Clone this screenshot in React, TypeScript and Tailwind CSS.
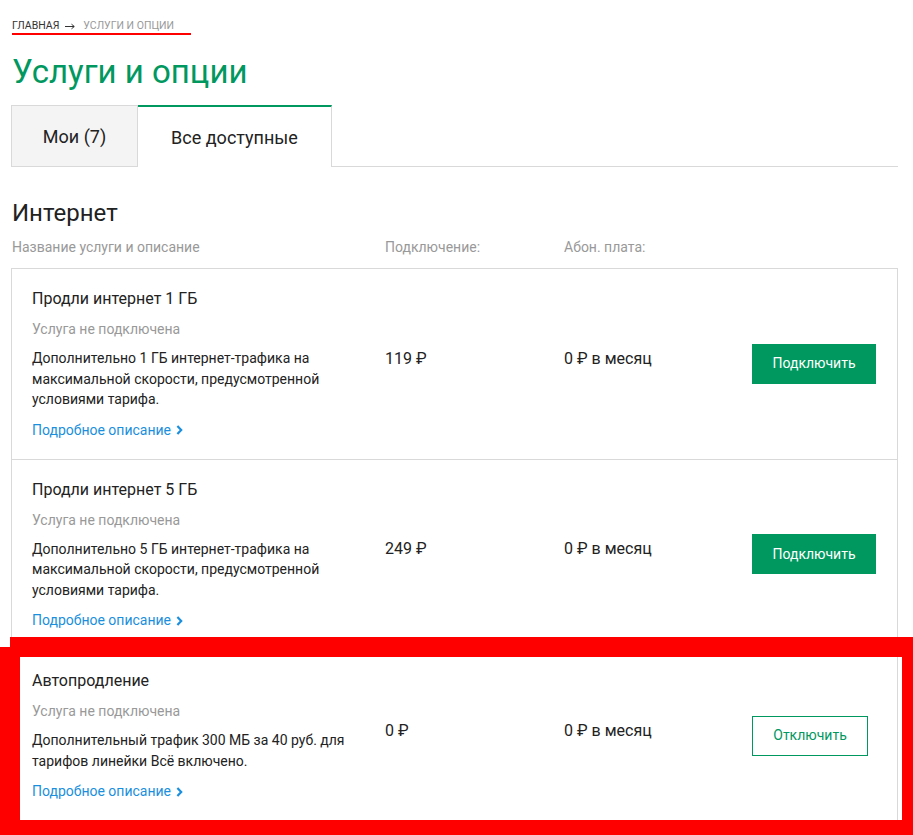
import React from "react";

type Service = {
  title: string;
  desc: string;
  price: string;
  connected: boolean;
};

const services: Service[] = [
  {
    title: "Продли интернет 1 ГБ",
    desc: "Дополнительно 1 ГБ интернет-трафика на максимальной скорости, предусмотренной условиями тарифа.",
    price: "119 ₽",
    connected: false,
  },
  {
    title: "Продли интернет 5 ГБ",
    desc: "Дополнительно 5 ГБ интернет-трафика на максимальной скорости, предусмотренной условиями тарифа.",
    price: "249 ₽",
    connected: false,
  },
  {
    title: "Автопродление",
    desc: "Дополнительный трафик 300 МБ за 40 руб. для тарифов линейки Всё включено.",
    price: "0 ₽",
    connected: true,
  },
];

function Chevron() {
  return (
    <svg width="7" height="10" viewBox="0 0 7 10" className="inline-block ml-[5px] mb-[1px]">
      <path d="M1.4 1 L5.2 5 L1.4 9" fill="none" stroke="#1a8fdd" strokeWidth="2.2" />
    </svg>
  );
}

function Row({ s, last }: { s: Service; last: boolean }) {
  return (
    <div
      className={`flex items-center pl-[20px] pr-[20px] ${last ? "pt-[1px]" : "border-b border-[#d9d9d9]"}`}
    >
      <div className="w-[353px] shrink-0 pt-[18px] pb-[19px]">
        <div className="text-[16px] leading-[24px] text-[#222]">{s.title}</div>
        <div className="mt-[8px] text-[14px] leading-[20px] text-[#999]">Услуга не подключена</div>
        <div className="mt-[9px] w-[330px] text-[14px] leading-[20.5px] text-[#222]">{s.desc}</div>
        <div className="mt-[10px] text-[14px] leading-[20px] text-[#1a8fdd]">
          Подробное описание
          <Chevron />
        </div>
      </div>
      <div className="w-[179px] shrink-0 pb-[10px] text-[16px] leading-[20px] text-[#222]">{s.price}</div>
      <div className="w-[188px] shrink-0 pb-[10px] text-[16px] leading-[20px] text-[#222]">0 ₽ в месяц</div>
      <div className="flex-1">
        {s.connected ? (
          <button className="h-[40px] w-[116px] border border-[#00985f] bg-white text-[14px] text-[#00985f]">
            Отключить
          </button>
        ) : (
          <button className="h-[40px] w-[124px] bg-[#00985f] text-[14px] text-white">Подключить</button>
        )}
      </div>
    </div>
  );
}

export default function App() {
  return (
    <div
      className="relative min-h-[835px] bg-white overflow-hidden"
      style={{ fontFamily: "Roboto, 'Noto Sans', sans-serif" }}
    >
      <div className="ml-[11px] w-[887px] pt-[20px]">
        <div className="pl-[1px] h-[12px] text-[10.5px] leading-[12px] uppercase flex items-center">
          <span className="text-[#333]">Главная</span>
          <svg width="10" height="7" viewBox="0 0 10 7" className="ml-[6px] mr-[8px] mt-[1px]">
            <path d="M0 3.5 H9" stroke="#333" strokeWidth="1" />
            <path d="M6.5 1.2 L9.3 3.5 L6.5 5.8" fill="none" stroke="#333" strokeWidth="1" />
          </svg>
          <span className="text-[#999]">Услуги и опции</span>
        </div>
        <div className="mt-[1px] ml-[1px] h-[2px] w-[179px] bg-[#ff0000]" />

        <h1 className="mt-[17px] pl-[1px] text-[33px] leading-[40px] text-[#00985f]">Услуги и опции</h1>

        <div className="mt-[13px] flex h-[62px] border-b border-[#d9d9d9]">
          <div className="w-[127px] -mb-px flex items-center justify-center border border-[#d9d9d9] bg-[#f4f4f4] text-[18px] text-[#222]">
            Мои (7)
          </div>
          <div className="w-[194px] -mb-px flex items-center justify-center border-t-2 border-t-[#00985f] border-r border-r-[#d9d9d9] bg-white text-[18px] text-[#222]">
            Все доступные
          </div>
        </div>

        <h2 className="mt-[32px] pl-[1px] text-[24px] leading-[28px] text-[#222]">Интернет</h2>
        <div className="mt-[10px] flex pl-[1px] text-[14px] leading-[20px] text-[#999]">
          <div className="w-[373px]">Название услуги и описание</div>
          <div className="w-[179px]">Подключение:</div>
          <div>Абон. плата:</div>
        </div>

        <div className="mt-[11px] border-x border-t border-[#d9d9d9]">
          {services.map((s, i) => (
            <Row key={i} s={s} last={i === services.length - 1} />
          ))}
        </div>
      </div>

      {/* red highlight overlay */}
      <div className="pointer-events-none absolute left-[10px] top-[637px] h-[203px] w-[912px] border-t-[20px] border-l-[10px] border-r-[20px] border-b-[20px] border-[#ff0000]" />
      <div className="pointer-events-none absolute left-0 top-[647px] h-[193px] w-[10px] bg-[#ff0000]" />
    </div>
  );
}
